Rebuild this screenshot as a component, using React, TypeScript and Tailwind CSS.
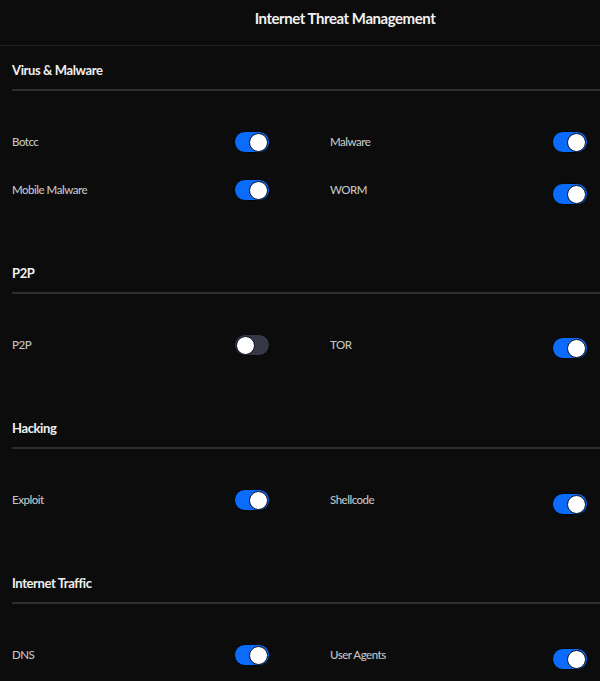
import React from "react";

type Item = { label: string; on: boolean; shift?: string };
type Section = { title: string; rows: [Item, Item][] };

const sections: Section[] = [
  {
    title: "Virus & Malware",
    rows: [
      [
        { label: "Botcc", on: true },
        { label: "Malware", on: true },
      ],
      [
        { label: "Mobile Malware", on: true },
        { label: "WORM", on: true, shift: "mt-2" },
      ],
    ],
  },
  {
    title: "P2P",
    rows: [
      [
        { label: "P2P", on: false },
        { label: "TOR", on: true, shift: "mt-[6px]" },
      ],
    ],
  },
  {
    title: "Hacking",
    rows: [
      [
        { label: "Exploit", on: true },
        { label: "Shellcode", on: true, shift: "mt-2" },
      ],
    ],
  },
  {
    title: "Internet Traffic",
    rows: [
      [
        { label: "DNS", on: true },
        { label: "User Agents", on: true, shift: "mt-2" },
      ],
    ],
  },
];

function Toggle({ on, shift }: { on: boolean; shift?: string }) {
  return (
    <div
      className={
        "flex h-[22px] w-[36px] shrink-0 items-center rounded-full border border-[#06070a] px-[1px] " +
        (on ? "justify-end bg-[#0b6cfb] " : "justify-start bg-[#363945] ") +
        (shift ?? "")
      }
    >
      <div className="h-[19px] w-[19px] rounded-full border border-[#0b1020] bg-white" />
    </div>
  );
}

export default function App() {
  return (
    <div
      className="min-h-[681px] w-full bg-[#0c0c0c] text-white"
      style={{ fontFamily: "Lato, 'Noto Sans', sans-serif" }}
    >
      <div className="flex h-[46px] items-center justify-center border-b border-[#222222] pl-[90px] pb-[9px]">
        <h1 className="text-[15px] font-bold tracking-[-0.45px] text-[#f2f2f2]">Internet Threat Management</h1>
      </div>
      <div className="pt-[14px]">
        {sections.map((s, si) => (
          <div key={s.title} className={si === 0 ? "" : "mt-[49px]"}>
            <div className="ml-3 border-b-2 border-[#2e2e2e] pb-[9px]">
              <h2 className="text-[13px] leading-5 font-bold tracking-[-0.4px] text-[#f0f0f0]">{s.title}</h2>
            </div>
            <div className="pt-[27px] pl-3 pr-3">
              {s.rows.map((row, ri) => (
                <div key={ri} className="grid grid-cols-2 gap-x-[60px]">
                  {row.map((it) => (
                    <div key={it.label} className="flex h-12 items-center justify-between">
                      <span className="text-[11.5px] font-medium tracking-[-0.5px] text-[#c4c4c4]">{it.label}</span>
                      <Toggle on={it.on} shift={it.shift} />
                    </div>
                  ))}
                </div>
              ))}
            </div>
          </div>
        ))}
      </div>
    </div>
  );
}
